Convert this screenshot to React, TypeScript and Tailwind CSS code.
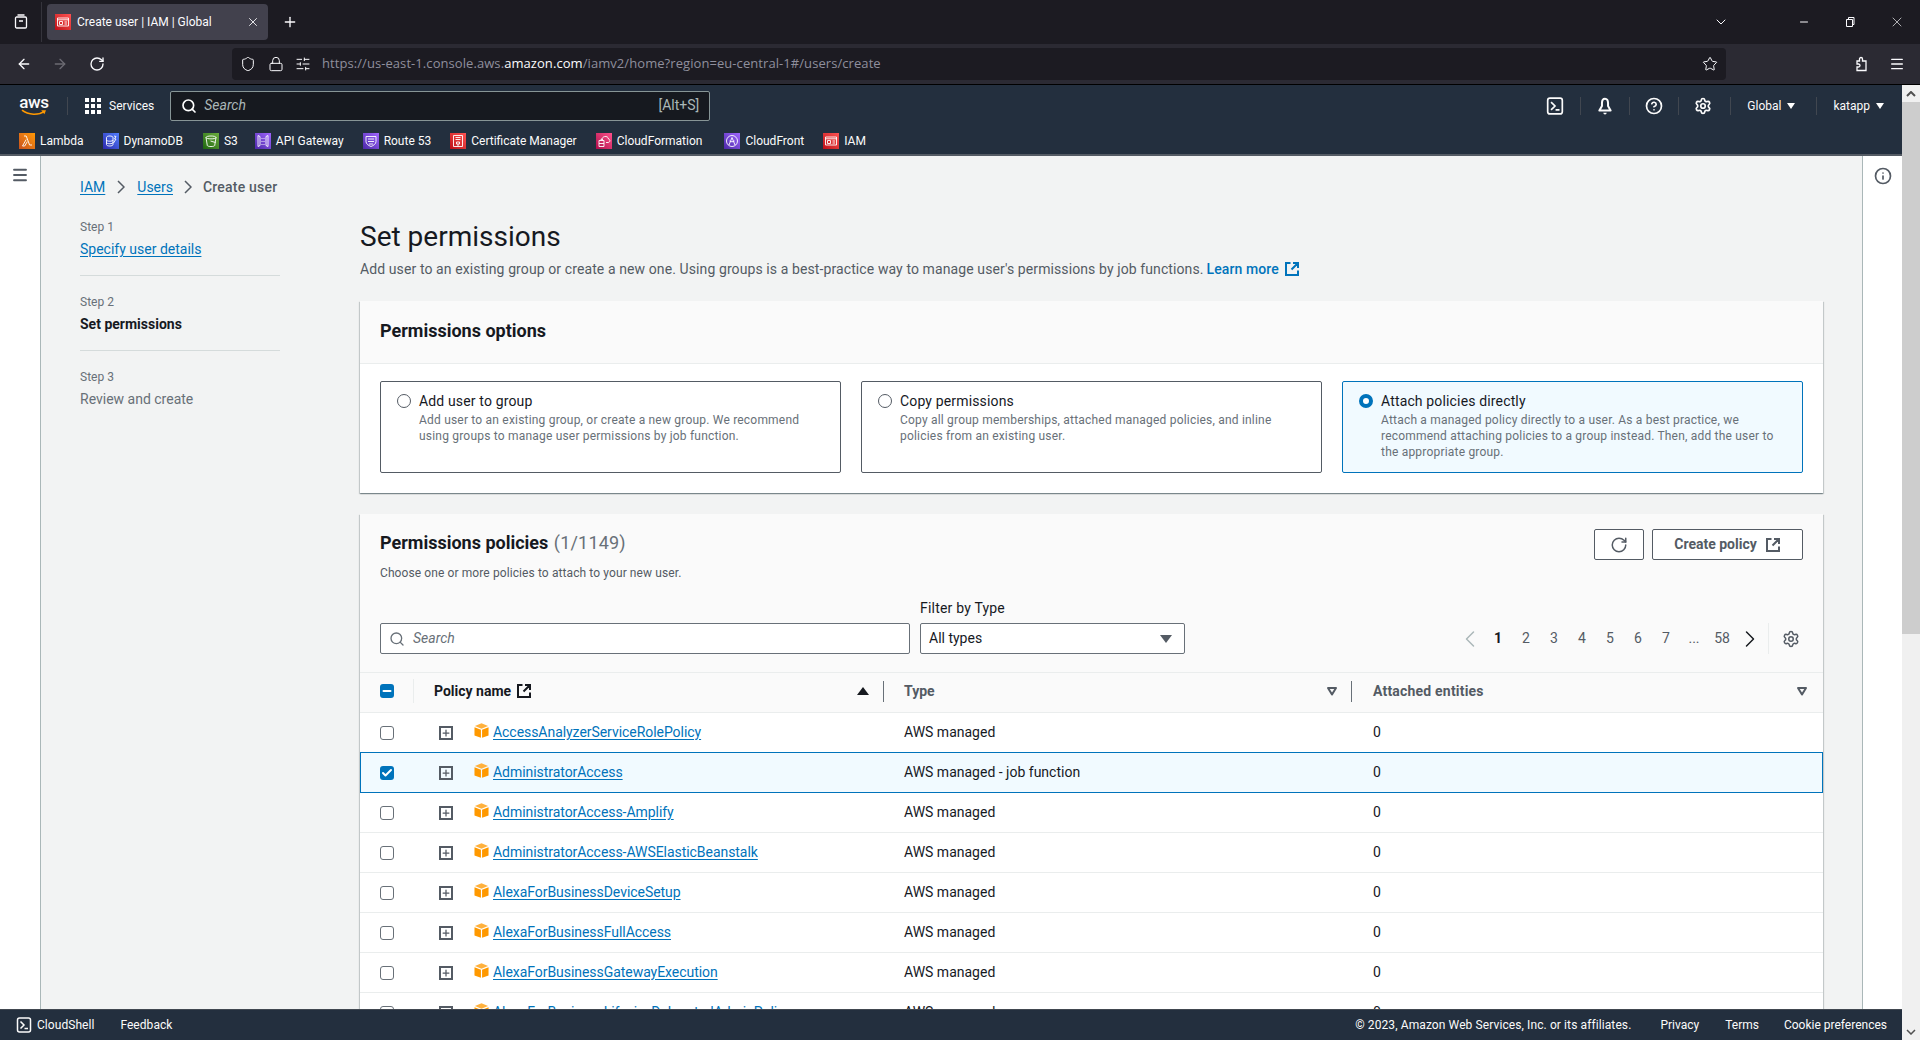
import { ArrowLeft, ArrowRight, ChevronDown, ChevronLeft, ChevronRight, CircleHelp, Info, Lock, Menu, Minus, Plus, RotateCw, Search, Settings, Shield, SlidersHorizontal, Star, X, Check } from "lucide-react"

const favorites = [
  { name: "Lambda", color: "from-[#c8511b] to-[#ff9900]", gap: "mr-[19px]", d: "M5 3h2.2l3.4 9H13M7.2 6.5 3.5 13h2.2l2.6-4.4" },
  { name: "DynamoDB", color: "from-[#2e27ad] to-[#527fff]", gap: "mr-[20px]", d: "M3.5 4.5c0-2 6.5-2 6.5 0v7c0 2-6.5 2-6.5 0zM3.5 7c0 1.6 6.5 1.6 6.5 0M3.5 9.5c0 1.6 6.5 1.6 6.5 0M11 3l2 .5-1.5 2.5H13l-2.5 4" },
  { name: "S3", color: "from-[#1b660f] to-[#6cae3e]", gap: "mr-[17px]", d: "M3 4.5c0-2 10-2 10 0l-1.3 8c-.4 1.4-7 1.4-7.4 0zM3 4.5c0 1.8 10 1.8 10 0M7.5 8l5 1.5" },
  { name: "API Gateway", color: "from-[#4d27a8] to-[#a166ff]", gap: "mr-[19px]", d: "M3 2.5v11l2-1v-9zM13 2.5v11l-2-1v-9zM7 5v1M9 5v1M7 8v1M9 8v1M7 11v1M9 11v1" },
  { name: "Route 53", color: "from-[#4d27a8] to-[#a166ff]", gap: "mr-[19px]", d: "M3 3.5h10v5c0 2.5-2.5 4-5 5-2.500-1-5-2.500-5-5zM5 6h6M5 8.500h6M6 11h4" },
  { name: "Certificate Manager", color: "from-[#bd0816] to-[#ff5252]", gap: "mr-[19px]", d: "M3.500 2.500h9v11h-9zM5.500 4.500h5M5.500 6.500h5M6.500 9h3v2h-3zM8 11v2" },
  { name: "CloudFormation", color: "from-[#b0084d] to-[#ff4f8b]", gap: "mr-[22px]", d: "M6 7c-.5-4 6-5 6.500-1 2 .3 1.800 3.500-.5 3.500H10M3 7.500h5v6H3zM5 7.500V6.200h1.500V7.500M3 10.500h5" },
  { name: "CloudFront", color: "from-[#4d27a8] to-[#a166ff]", gap: "mr-[19px]", d: "M8 2.500a5.500 5.500 0 1 0 0 11 5.500 5.500 0 0 0 0-11zM8 4.500 5 12M8 4.500l3 7.500M5.500 8c2 1 3 1 5 0" },
  { name: "IAM", color: "from-[#bd0816] to-[#ff5252]", gap: "", d: "M2.500 4h11v8h-11zM2.500 5.800h11M4.500 7.500h3v3h-3zM9.500 8h2.500M9.500 10h2.500" },
]

const iamIcon = favorites[8]

const options = [
  {
    title: "Add user to group",
    text: "Add user to an existing group, or create a new group. We recommend using groups to manage user permissions by job function.",
  },
  {
    title: "Copy permissions",
    text: "Copy all group memberships, attached managed policies, and inline policies from an existing user.",
  },
  {
    title: "Attach policies directly",
    text: "Attach a managed policy directly to a user. As a best practice, we recommend attaching policies to a group instead. Then, add the user to the appropriate group.",
    selected: true,
  },
]

const policies = [
  { name: "AccessAnalyzerServiceRolePolicy", type: "AWS managed" },
  { name: "AdministratorAccess", type: "AWS managed - job function", selected: true },
  { name: "AdministratorAccess-Amplify", type: "AWS managed" },
  { name: "AdministratorAccess-AWSElasticBeanstalk", type: "AWS managed" },
  { name: "AlexaForBusinessDeviceSetup", type: "AWS managed" },
  { name: "AlexaForBusinessFullAccess", type: "AWS managed" },
  { name: "AlexaForBusinessGatewayExecution", type: "AWS managed" },
  { name: "AlexaForBusinessLifesizeDelegatedAdminPolicy", type: "AWS managed" },
]

function ServiceIcon({ color, d }: { color: string; d: string }) {
  return (
    <span className={`flex h-4 w-4 shrink-0 items-center justify-center bg-gradient-to-tr ${color}`}>
      <svg viewBox="0 0 16 16" className="h-4 w-4" fill="none" stroke="white" strokeWidth="0.9">
        <path d={d} />
      </svg>
    </span>
  )
}

function Cube() {
  return (
    <svg viewBox="0 0 16 16" className="mb-[5px] mr-1 h-[15px] w-[15px] shrink-0">
      <path d="M.5 4.600 7.400 7.200V15.800L.5 13.200Z" fill="#ff9900" />
      <path d="M15.500 4.600 8.600 7.200V15.800L15.500 13.200Z" fill="#ff9900" />
      <path d="M8 .3 15 3.300 8 6 1 3.300Z" fill="#ffb13d" />
    </svg>
  )
}

function SortDown() {
  return (
    <svg viewBox="0 0 12 12" className="h-3 w-3">
      <path d="M2 3h8L6 9.500Z" fill="none" stroke="#545b64" strokeWidth="2" strokeLinejoin="round" />
    </svg>
  )
}

function External({ className }: { className: string }) {
  return (
    <svg viewBox="0 0 16 16" className={className} fill="none" stroke="currentColor" strokeWidth="2">
      <path d="M6.500 2H2v12h12V9.500M9 2h5v5M14 2 7.500 8.500" />
    </svg>
  )
}

function Terminal({ className }: { className: string }) {
  return (
    <svg viewBox="0 0 16 16" className={className} fill="none" stroke="currentColor" strokeWidth="1.500">
      <rect x="1.500" y="1" width="13" height="14" rx="2" />
      <path d="M4.500 4.500 8 8l-3.500 3.500M8.500 11.500H12" />
    </svg>
  )
}

function Crumb({ className }: { className: string }) {
  return (
    <svg viewBox="0 0 8 14" className={`h-[14px] w-[8px] shrink-0 ${className}`} fill="none" stroke="#545b64" strokeWidth="1.500">
      <path d="M1 1l6 6-6 6" />
    </svg>
  )
}

export default function App() {
  return (
    <div className="flex h-[1040px] w-[1920px] flex-col overflow-hidden font-['Roboto',sans-serif] text-[14px] text-[#16191f]">
      {/* Browser tabs */}
      <div className="flex h-[44px] shrink-0 items-center bg-[#1c1b22] text-[#fbfbfe]">
        <div className="flex h-[40px] w-[42px] items-center justify-center border-r border-[#35343c]">
          <svg viewBox="0 0 16 16" className="h-4 w-4" fill="none" stroke="currentColor" strokeWidth="1.300">
            <path d="M4.500 1h7M2.500 4.200c0-.7.5-1.200 1.200-1.200h8.600c.7 0 1.200.5 1.200 1.200v8.600c0 .7-.5 1.200-1.200 1.200H3.700c-.7 0-1.200-.5-1.200-1.200zM6 7h4" />
          </svg>
        </div>
        <div className="ml-[5px] flex h-[36px] w-[221px] items-center rounded-[4px] bg-[#42414d] pl-2 pr-2 text-[12px]">
          <ServiceIcon color={iamIcon.color} d={iamIcon.d} />
          <span className="ml-[6px] flex-1">Create user | IAM | Global</span>
          <X className="h-3.5 w-3.5 stroke-[1.5]" />
        </div>
        <Plus className="ml-[14px] h-4 w-4" />
        <div className="ml-auto flex items-center">
          <ChevronDown className="mr-[69px] h-4 w-4 stroke-[1.5]" />
          <Minus className="mr-[34px] h-3 w-3" />
          <svg viewBox="0 0 12 12" className="mr-[33px] h-3 w-3" fill="none" stroke="currentColor">
            <path d="M2.500 3.500h6v7h-6zM4.500 3.500v-2h5.500v7H8.500" />
          </svg>
          <X className="mr-[15px] h-4 w-4 stroke-1" />
        </div>
      </div>

      {/* Browser toolbar */}
      <div className="flex h-[41px] shrink-0 items-center border-b border-black bg-[#2b2a33] pb-px pl-4 text-[#fbfbfe]">
        <ArrowLeft className="h-4 w-4" />
        <ArrowRight className="ml-[20px] h-4 w-4 text-[#6c6b73]" />
        <RotateCw className="ml-[21px] h-4 w-4" />
        <div className="ml-[127px] flex h-[32px] w-[1494px] items-center rounded-[4px] bg-[#1c1b22] pl-2 pr-[8px]">
          <Shield className="h-4 w-4 stroke-[1.5]" />
          <Lock className="ml-[12px] h-4 w-4 stroke-[1.5]" />
          <SlidersHorizontal className="ml-[11px] h-4 w-4 stroke-[1.5]" />
          <div className="ml-[11px] flex-1 font-['Open_Sans',sans-serif] text-[13px] tracking-[0.07px] text-[#8f8f9d]">
            https://us-east-1.console.aws.<span className="text-[#fbfbfe]">amazon.com</span>/iamv2/home?region=eu-central-1#/users/create
          </div>
          <Star className="h-4 w-4 stroke-[1.5]" />
        </div>
        <svg viewBox="0 0 16 16" className="ml-[127px] h-4 w-4" fill="none" stroke="currentColor" strokeWidth="1.300">
          <path d="M6.500 3a1.500 1.500 0 0 1 3 0V5H13v9.500H4V11H5.500a1.500 1.500 0 0 0 0-3H4V5h2.500z" />
        </svg>
        <Menu className="ml-[20px] h-4 w-4" />
      </div>

      <div className="flex min-h-0 flex-1">
        <div className="flex min-w-0 flex-1 flex-col">
          {/* AWS top nav */}
          <div className="h-[71px] shrink-0 border-b-2 border-[#545b64] bg-[#232f3e] text-[#fbfbfb]">
            <div className="flex h-[41px] items-center pl-[18px]">
              <div className="flex h-[30px] w-[32px] flex-col items-center justify-center">
                <span className="text-[17px] font-medium leading-[14px] tracking-[-0.3px]">aws</span>
                <svg viewBox="0 0 32 10" className="h-[8px] w-[30px]">
                  <path d="M1 1.500C9 8 22 8 29 3" fill="none" stroke="#ff9900" strokeWidth="2" />
                  <path d="M25 1.500h6l-2 5Z" fill="#ff9900" />
                </svg>
              </div>
              <div className="ml-[17px] flex items-center border-l border-[#414750] pl-4">
                <svg viewBox="0 0 18 18" className="h-[18px] w-[18px]" fill="white">
                  <rect x="1" y="1" width="4" height="4" /><rect x="7" y="1" width="4" height="4" /><rect x="13" y="1" width="4" height="4" />
                  <rect x="1" y="7" width="4" height="4" /><rect x="7" y="7" width="4" height="4" /><rect x="13" y="7" width="4" height="4" />
                  <rect x="1" y="13" width="4" height="4" /><rect x="7" y="13" width="4" height="4" /><rect x="13" y="13" width="4" height="4" />
                </svg>
                <span className="ml-[7px] text-[12px]">Services</span>
              </div>
              <div className="ml-[16px] flex h-[30px] w-[540px] items-center rounded-[2px] border border-[#879596] bg-[#16191f] pl-[10px] pr-[10px] text-[#aab7b8]">
                <Search className="h-4 w-4 stroke-[2.5] text-white" />
                <span className="ml-[7px] flex-1 text-[14px] italic">Search</span>
                <span className="text-[14px]">[Alt+S]</span>
              </div>
              <div className="ml-auto flex items-center pr-[18px]">
                <Terminal className="mr-[16px] h-[18px] w-[18px]" />
                <div className="flex items-center border-l border-[#414750] pl-[15px]">
                  <svg viewBox="0 0 16 16" className="h-[18px] w-[18px]" fill="none" stroke="currentColor" strokeWidth="1.800" strokeLinejoin="round">
                    <path d="M8 1.500C6.300 1.500 5.300 3 5.300 5.500V8L3 12h10l-2.300-4V5.500C10.700 3 9.700 1.500 8 1.500Z" />
                    <path d="M6.500 14a1.500 1.500 0 0 0 3 0Z" fill="currentColor" stroke="none" />
                  </svg>
                </div>
                <div className="ml-[15px] flex items-center border-l border-[#414750] pl-[15px]"><CircleHelp className="h-[18px] w-[18px] stroke-[2.25]" /></div>
                <div className="ml-[15px] flex items-center border-l border-[#414750] pl-[15px]"><Settings className="h-[18px] w-[18px] stroke-[2.25]" /></div>
                <div className="ml-[18px] flex items-center gap-[6px] border-l border-[#414750] pl-[16px] text-[12px]">Global<span className="h-0 w-0 border-x-[4px] border-t-[6px] border-x-transparent border-t-white" /></div>
                <div className="ml-[21px] flex items-center gap-[6px] border-l border-[#414750] pl-[16px] text-[12px]">katapp<span className="h-0 w-0 border-x-[4px] border-t-[6px] border-x-transparent border-t-white" /></div>
              </div>
            </div>
            <div className="mt-[3px] flex h-[24px] items-center pl-[19px] text-[12px]">
              {favorites.map((f) => (
                <div key={f.name} className={`flex items-center ${f.gap}`}>
                  <ServiceIcon color={f.color} d={f.d} />
                  <span className="ml-[5px]">{f.name}</span>
                </div>
              ))}
            </div>
          </div>

          <div className="flex min-h-0 flex-1">
            {/* Left rail */}
            <div className="w-[41px] shrink-0 border-r border-[#aab7b8] bg-white pl-[11px] pt-[9px]">
              <Menu className="h-5 w-[18px] stroke-[2.5] text-[#545b64]" />
            </div>

            {/* Main */}
            <div className="flex min-w-0 flex-1 overflow-hidden bg-[#f2f3f3] pl-[39px] pr-[39px]">
              <div className="w-[200px] shrink-0 pt-[21px]">
                <div className="flex h-[20px] items-center whitespace-nowrap text-[14px]">
                  <span className="text-[#0073bb] underline underline-offset-2">IAM</span>
                  <Crumb className="ml-[12px] mr-[12px]" />
                  <span className="text-[#0073bb] underline underline-offset-2">Users</span>
                  <Crumb className="mx-[11px]" />
                  <span className="font-medium tracking-[0.2px] text-[#545b64]">Create user</span>
                </div>
                <div className="mt-[20px] border-b border-[#d5dbdb] pb-[16px]">
                  <div className="text-[12px] leading-[20px] text-[#687078]">Step 1</div>
                  <div className="mt-[2px] leading-[20px] text-[#0073bb] underline underline-offset-2">Specify user details</div>
                </div>
                <div className="mt-[16px] border-b border-[#d5dbdb] pb-[16px]">
                  <div className="text-[12px] leading-[20px] text-[#687078]">Step 2</div>
                  <div className="mt-[2px] font-bold leading-[20px]">Set permissions</div>
                </div>
                <div className="mt-[16px]">
                  <div className="text-[12px] leading-[20px] text-[#687078]">Step 3</div>
                  <div className="mt-[2px] leading-[20px] text-[#687078]">Review and create</div>
                </div>
              </div>

              <div className="ml-[80px] min-w-0 flex-1 pt-[63px]">
                <h1 className="text-[28px] font-normal leading-[36px]">Set permissions</h1>
                <p className="mt-[4px] flex items-center leading-[20px] tracking-[0.1px] text-[#545b64]">
                  Add user to an existing group or create a new one. Using groups is a best-practice way to manage user's permissions by job functions.
                  <span className="ml-[3px] flex items-center font-medium text-[#0073bb]">Learn more<External className="ml-[5px] h-4 w-4" /></span>
                </p>

                {/* Options card */}
                <div className="mt-[22px] bg-white shadow-[0_1px_1px_0_rgba(0,28,36,0.3),1px_1px_1px_0_rgba(0,28,36,0.15),-1px_1px_1px_0_rgba(0,28,36,0.15)]">
                  <div className="flex h-[63px] items-center border-b border-[#eaeded] bg-[#fafafa] pb-[3px] pl-[20px] text-[18px] font-bold">Permissions options</div>
                  <div className="flex gap-[20px] px-[20px] pb-[20px] pt-[17px]">
                    {options.map((o) => (
                      <div key={o.title} className={`flex h-[92px] flex-1 rounded-[2px] border px-[16px] pt-[9px] ${o.selected ? "border-[#0073bb] bg-[#f1faff]" : "border-[#545b64] bg-white"}`}>
                        {o.selected ? (
                          <span className="mt-[3px] h-[14px] w-[14px] shrink-0 rounded-full border-[4px] border-[#0073bb] bg-white" />
                        ) : (
                          <span className="mt-[3px] h-[14px] w-[14px] shrink-0 rounded-full border border-[#545b64] bg-white" />
                        )}
                        <div className="ml-[8px]">
                          <div className="leading-[20px] tracking-[0.15px]">{o.title}</div>
                          <div className="mt-[1px] text-[12px] leading-[16px] tracking-[0.2px] text-[#687078]">{o.text}</div>
                        </div>
                      </div>
                    ))}
                  </div>
                </div>

                {/* Policies card */}
                <div className="mt-[21px] bg-white shadow-[0_1px_1px_0_rgba(0,28,36,0.3),1px_1px_1px_0_rgba(0,28,36,0.15),-1px_1px_1px_0_rgba(0,28,36,0.15)]">
                  <div className="bg-[#fafafa] px-[20px] pt-[15px]">
                    <div className="flex items-start justify-between">
                      <div>
                        <div className="text-[18px] font-bold leading-[28px]">Permissions policies <span className="ml-[1px] font-normal tracking-[0.2px] text-[#687078]">(1/1149)</span></div>
                        <div className="mt-[8px] text-[12px] leading-[16px] tracking-[0.1px] text-[#545b64]">Choose one or more policies to attach to your new user.</div>
                      </div>
                      <div className="flex gap-[8px]">
                        <button className="flex h-[31px] w-[50px] items-center justify-center rounded-[2px] border border-[#545b64] bg-white text-[#545b64]"><RotateCw className="h-[18px] w-[18px]" /></button>
                        <button className="flex h-[31px] w-[151px] items-center justify-center gap-[8px] rounded-[2px] border border-[#545b64] bg-white font-bold text-[#545b64]">Create policy<External className="h-4 w-4" /></button>
                      </div>
                    </div>
                    <div className="mt-[17px] flex items-end pb-[18px]">
                      <div className="flex h-[31px] w-[530px] items-center rounded-[2px] border border-[#687078] bg-white pl-[8px] text-[#687078]">
                        <Search className="h-4 w-4" />
                        <span className="ml-[8px] italic">Search</span>
                      </div>
                      <div className="ml-[10px]">
                        <div className="mb-[5px] leading-[20px] tracking-[0.2px]">Filter by Type</div>
                        <div className="flex h-[31px] w-[265px] items-center justify-between rounded-[2px] border border-[#687078] bg-white pl-[8px] pr-[12px]">
                          All types
                          <span className="h-0 w-0 border-x-[6px] border-t-[8px] border-x-transparent border-t-[#545b64]" />
                        </div>
                      </div>
                      <div className="ml-auto flex h-[31px] items-center text-[#545b64]">
                        <ChevronLeft className="-ml-[2px] h-[28px] w-[28px] stroke-[1.25] text-[#aab7b8]" />
                        {["1", "2", "3", "4", "5", "6", "7", "...", "58"].map((p) => (
                          <span key={p} className={`w-[28px] text-center ${p === "1" ? "font-bold text-[#16191f]" : ""}`}>{p}</span>
                        ))}
                        <ChevronRight className="h-[28px] w-[28px] stroke-[1.25] text-[#16191f]" />
                        <div className="ml-[4px] flex h-[31px] items-center border-l border-[#eaeded] pl-[13px] pr-[3px]"><Settings className="h-[18px] w-[18px]" /></div>
                      </div>
                    </div>
                  </div>

                  {/* Table */}
                  <div className="flex h-[41px] items-center border-y border-[#eaeded] bg-[#fafafa] pb-[3px] font-bold text-[#545b64]">
                    <div className="flex w-[74px] shrink-0 items-center pl-[20px]">
                      <span className="flex h-[14px] w-[14px] items-center justify-center rounded-[3px] bg-[#0073bb]"><Minus className="h-3 w-3 stroke-[4] text-white" /></span>
                      <span className="ml-[19px] h-[24px] border-l border-[#eaeded]" />
                    </div>
                    <div className="flex w-[450px] shrink-0 items-center border-r border-[#687078] pr-[14px] text-[#16191f]">
                      Policy name<External className="ml-[5px] h-4 w-4" />
                      <span className="ml-auto h-0 w-0 border-x-[6px] border-b-[8px] border-x-transparent border-b-[#16191f]" />
                    </div>
                    <div className="flex w-[468px] shrink-0 items-center justify-between border-r border-[#687078] pl-[20px] pr-[13px]">Type<SortDown /></div>
                    <div className="flex flex-1 items-center justify-between pl-[21px] pr-[15px]"><span className="tracking-[0.2px]">Attached entities</span><SortDown /></div>
                  </div>
                  {policies.map((p) => (
                    <div key={p.name} className={`flex items-center ${p.selected ? "-mt-px h-[41px] bg-[#f1faff] shadow-[inset_0_0_0_1px_#0073bb]" : "h-[40px] border-b border-[#eaeded]"}`}>
                      <div className="flex w-[74px] shrink-0 items-center pl-[20px]">
                        {p.selected ? (
                          <span className="flex h-[14px] w-[14px] items-center justify-center rounded-[3px] bg-[#0073bb]"><Check className="h-3 w-3 stroke-[4] text-white" /></span>
                        ) : (
                          <span className="h-[14px] w-[14px] rounded-[3px] border border-[#687078] bg-white" />
                        )}
                      </div>
                      <div className="flex w-[450px] shrink-0 items-center pl-[5px]">
                        <span className="mr-[21px] flex h-[14px] w-[14px] items-center justify-center border-2 border-[#545b64]"><Plus className="h-2.5 w-2.5 stroke-[3] text-[#545b64]" /></span>
                        <Cube />
                        <span className="tracking-[-0.05px] text-[#0073bb] underline underline-offset-2">{p.name}</span>
                      </div>
                      <div className="w-[468px] shrink-0 pl-[20px]">{p.type}</div>
                      <div className="flex-1 pl-[21px]">0</div>
                    </div>
                  ))}
                </div>
              </div>
            </div>

            {/* Right rail */}
            <div className="w-[40px] shrink-0 border-l border-[#aab7b8] bg-white pl-[11px] pt-[11px]">
              <Info className="h-[18px] w-[18px] stroke-[2.25] text-[#545b64]" />
            </div>
          </div>

          {/* Footer */}
          <div className="flex h-[31px] shrink-0 items-center border-t border-[#414750] bg-[#232f3e] pl-[16px] pr-[15px] text-[12px] text-[#fbfbfb]">
            <Terminal className="h-4 w-4" />
            <span className="ml-[5px] tracking-[0.05px]">CloudShell</span>
            <span className="ml-[26px] tracking-[0.05px]">Feedback</span>
            <span className="ml-auto tracking-[0.1px]">© 2023, Amazon Web Services, Inc. or its affiliates.</span>
            <span className="ml-[29px]">Privacy</span>
            <span className="ml-[26px]">Terms</span>
            <span className="ml-[25px]">Cookie preferences</span>
          </div>
        </div>

        {/* Page scrollbar */}
        <div className="flex w-[18px] shrink-0 flex-col bg-[#f0f0f0]">
          <div className="flex h-[17px] items-center justify-center"><svg viewBox="0 0 10 6" className="h-[6px] w-[10px]"><path d="M1 5 5 1l4 4" fill="none" stroke="#505050" strokeWidth="2" /></svg></div>
          <div className="h-[532px] bg-[#cdcdcd]" />
          <div className="mt-auto flex h-[17px] items-center justify-center"><svg viewBox="0 0 10 6" className="h-[6px] w-[10px]"><path d="M1 1 5 5l4-4" fill="none" stroke="#505050" strokeWidth="1.500" /></svg></div>
        </div>
      </div>
    </div>
  )
}
